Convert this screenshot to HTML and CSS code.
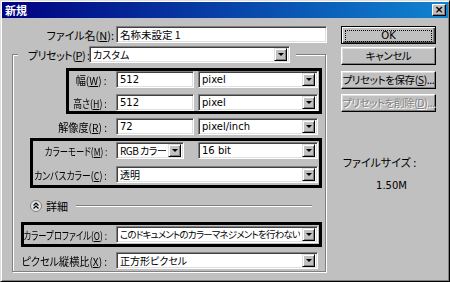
FILE: index.html
```html
<!DOCTYPE html>
<html lang="ja">
<head>
    <meta charset="UTF-8">
    <meta name="viewport" content="width=device-width, initial-scale=1.0">
    <title>新規</title>
    <link rel="stylesheet" href="styles.css">
</head>
<body>
    <div class="window">
        <div class="titlebar">
            <span class="title">新規</span>
            <span class="close">&#215;</span>
        </div>
        <div class="dialog">
            <div class="left">
                <div class="row name-row">
                    <label>ファイル名(<u>N</u>):</label>
                    <div class="field name-field">名称未設定 1</div>
                </div>

                <fieldset class="preset">
                    <legend>
                        <div class="legend-inner">
                            <label>プリセット(<u>P</u>) :</label>
                            <div class="field select preset-select"><span>カスタム</span><i class="arrow"></i></div>
                        </div>
                    </legend>

                    <div class="hl hl-size">
                        <div class="row">
                            <label><span class="cond-s">幅(<u>W</u>) :</span></label>
                            <div class="fields">
                                <div class="field num">512</div>
                                <div class="field select unit"><span>pixel</span><i class="arrow"></i></div>
                            </div>
                        </div>
                        <div class="row">
                            <label><span class="cond-m">高さ(<u>H</u>) :</span></label>
                            <div class="fields">
                                <div class="field num">512</div>
                                <div class="field select unit"><span>pixel</span><i class="arrow"></i></div>
                            </div>
                        </div>
                    </div>

                    <div class="row res-row">
                        <label><span class="cond-s">解像度(<u>R</u>) :</span></label>
                        <div class="fields">
                            <div class="field num">72</div>
                            <div class="field select unit"><span>pixel/inch</span><i class="arrow"></i></div>
                        </div>
                    </div>

                    <div class="hl hl-mode">
                        <div class="row">
                            <label><span class="cond-l">カラーモード(<u>M</u>) :</span></label>
                            <div class="fields">
                                <div class="field select mode"><span>RGB カラー</span><i class="arrow"></i></div>
                                <div class="field select unit"><span>16 bit</span><i class="arrow"></i></div>
                            </div>
                        </div>
                        <div class="row">
                            <label><span class="cond-m">カンバスカラー(<u>C</u>) :</span></label>
                            <div class="fields">
                                <div class="field select full"><span>透明</span><i class="arrow"></i></div>
                            </div>
                        </div>
                    </div>

                    <div class="details">
                        <svg class="toggle" width="12" height="12" viewBox="0 0 12 12">
                            <circle cx="6" cy="6" r="5.5" fill="#e4e4e4" stroke="#808080"/>
                            <polyline points="3.5,5.5 6,3 8.5,5.5" fill="none" stroke="#000" stroke-width="1.2"/>
                            <polyline points="3.5,8.5 6,6 8.5,8.5" fill="none" stroke="#000" stroke-width="1.2"/>
                        </svg>
                        <span class="details-label">詳細</span>
                        <span class="rule"></span>
                    </div>

                    <div class="hl hl-profile">
                        <div class="row">
                            <label><span class="cond-l">カラープロファイル(<u>O</u>) :</span></label>
                            <div class="fields">
                                <div class="field select full profile"><span>このドキュメントのカラーマネジメントを行わない</span><i class="arrow"></i></div>
                            </div>
                        </div>
                    </div>

                    <div class="row aspect-row">
                        <label><span class="cond-s">ピクセル縦横比(<u>X</u>) :</span></label>
                        <div class="fields">
                            <div class="field select full"><span>正方形ピクセル</span><i class="arrow"></i></div>
                        </div>
                    </div>
                </fieldset>
            </div>

            <div class="right">
                <button class="btn default"><span class="focus">OK</span></button>
                <button class="btn cancel">キャンセル</button>
                <button class="btn save">プリセットを保存(<u>S</u>)...</button>
                <button class="btn delete" disabled>プリセットを削除(<u>D</u>)...</button>
                <div class="size-info">
                    <div class="size-label">ファイルサイズ :</div>
                    <div class="size-value">1.50M</div>
                </div>
            </div>
        </div>
    </div>
</body>
</html>
```

FILE: styles.css
```css
body {
    margin: 0;
    font-family: "Noto Sans CJK JP", sans-serif;
    font-size: 11px;
    font-feature-settings: "palt";
    color: #000;
}

u {
    text-decoration: underline;
    text-underline-offset: 1px;
}

.window {
    width: 450px;
    height: 282px;
    box-sizing: border-box;
    background-color: #c0c0c0;
    border: 1px solid;
    border-color: #dfdfdf #000 #000 #dfdfdf;
    box-shadow: inset 1px 1px #fff, inset -1px -1px #808080;
    padding: 1px;
    overflow: hidden;
}

/* title bar */
.titlebar {
    height: 16px;
    display: flex;
    align-items: center;
    justify-content: space-between;
    padding: 0 2px 0 3px;
    background: linear-gradient(to right, #000080, #1084d0);
}

.title {
    color: #fff;
    font-weight: bold;
    font-size: 11px;
    line-height: 16px;
}

.close {
    width: 14px;
    height: 12px;
    box-sizing: border-box;
    background-color: #c0c0c0;
    border: 1px solid;
    border-color: #fff #000 #000 #fff;
    box-shadow: inset -1px -1px #808080;
    font-family: "DejaVu Sans", sans-serif;
    font-weight: bold;
    font-size: 11px;
    line-height: 9px;
    text-align: center;
}

/* dialog body */
.dialog {
    display: flex;
    padding: 8px 0 0 10px;
}

.left {
    width: 315px;
    min-width: 0;
}

.right {
    width: 95px;
    margin-left: 14px;
    display: flex;
    flex-direction: column;
}

.row {
    display: flex;
    align-items: center;
    height: 17px;
    margin-right: 7px;
}

.row label {
    flex: 1;
    min-width: 0;
    display: flex;
    justify-content: flex-end;
    padding-right: 9px;
    white-space: nowrap;
}

.row label span {
    display: inline-block;
    transform-origin: right center;
}

.cond-s {
    transform: scaleX(0.92);
}

.cond-m {
    transform: scaleX(0.8);
}

.cond-l {
    transform: scaleX(0.76);
}

.name-row {
    margin-right: 0;
}

.name-row label {
    padding-right: 2px;
}

.fields {
    flex: none;
    width: 202px;
    display: flex;
    justify-content: space-between;
}

/* inputs and selects */
.field {
    flex: none;
    height: 17px;
    box-sizing: border-box;
    background-color: #fff;
    border: 1px solid;
    border-color: #808080 #fff #fff #808080;
    box-shadow: inset 1px 1px #404040, inset -1px -1px #dfdfdf;
    padding: 0 2px 0 3px;
    font-size: 10px;
    line-height: 15px;
    white-space: nowrap;
    overflow: hidden;
}

.name-field {
    width: 211px;
    font-size: 10.5px;
}

.num {
    width: 78px;
    font-family: "DejaVu Sans", sans-serif;
}

.select {
    display: flex;
    align-items: center;
    justify-content: space-between;
    padding-right: 2px;
}

.select span {
    overflow: hidden;
}

.unit {
    width: 120px;
    font-family: "DejaVu Sans", sans-serif;
}

.mode {
    width: 68px;
}

.mode span {
    letter-spacing: -0.5px;
}

.full {
    width: 202px;
}

.profile span {
    font-size: 9.5px;
    letter-spacing: -0.8px;
}

.arrow {
    flex: none;
    width: 13px;
    height: 13px;
    box-sizing: border-box;
    background-color: #c0c0c0;
    border: 1px solid;
    border-color: #dfdfdf #000 #000 #dfdfdf;
    box-shadow: inset 1px 1px #fff, inset -1px -1px #808080;
    position: relative;
}

.arrow::after {
    content: "";
    position: absolute;
    left: 3px;
    top: 4px;
    border-left: 3px solid transparent;
    border-right: 3px solid transparent;
    border-top: 3px solid #000;
}

/* preset group */
.preset {
    margin: 3px 0 0 0;
    padding: 0 0 2px 0;
    width: 314px;
    min-width: 0;
    box-sizing: border-box;
    border: 1px solid #808080;
    box-shadow: inset 1px 1px #fff, 1px 1px #fff;
}

.preset legend {
    margin-left: 5px;
    padding: 0 6px 0 10px;
    background-color: #c0c0c0;
}

.legend-inner {
    display: flex;
    align-items: center;
}

.legend-inner label {
    width: 61px;
    white-space: nowrap;
    letter-spacing: -0.5px;
}

.preset-select {
    width: 201px;
}

/* highlight frames */
.hl {
    border: 3px solid #000;
    margin-right: 3px;
    padding-right: 1px;
}

.hl .row {
    margin-right: 0;
}

.hl-size {
    margin-top: 5px;
    margin-left: 53px;
}

.hl-size .row + .row {
    margin-top: 6px;
}

.res-row {
    margin-top: 4px;
}

.hl-mode {
    margin-top: 3px;
    margin-left: 17px;
    padding-top: 1px;
    padding-bottom: 2px;
}

.hl-mode .row + .row {
    margin-top: 7px;
}

.hl-profile {
    margin-top: 10px;
    margin-left: 8px;
    padding-top: 1px;
    padding-bottom: 1px;
}

.aspect-row {
    margin-top: 5px;
}

/* details toggle */
.details {
    display: flex;
    align-items: center;
    height: 13px;
    margin: 11px 13px 0 17px;
}

.toggle {
    flex: none;
}

.details-label {
    margin-left: 4px;
}

.rule {
    flex: 1;
    margin-left: 8px;
    border-top: 1px solid #808080;
    border-bottom: 1px solid #fff;
}

/* buttons */
.btn {
    height: 18px;
    width: 95px;
    padding: 0;
    background-color: #c0c0c0;
    border: 1px solid;
    border-color: #fff #000 #000 #fff;
    box-shadow: inset -1px -1px #808080, inset 1px 1px #dfdfdf;
    font-family: "Noto Sans CJK JP", sans-serif;
    font-feature-settings: "palt";
    font-size: 10.5px;
    letter-spacing: -0.4px;
    line-height: 14px;
    white-space: nowrap;
    color: #000;
}

.btn.default {
    border: 1px solid #000;
    box-shadow: inset 1px 1px #fff, inset -1px -1px #404040, inset -2px -2px #808080;
    font-family: "DejaVu Sans", sans-serif;
    font-size: 10px;
    letter-spacing: 0;
}

.focus {
    display: block;
    margin: 3px;
    height: 10px;
    line-height: 10px;
    border: 1px dotted #000;
}

.cancel {
    margin-top: 3px;
}

.save {
    margin-top: 6px;
}

.delete {
    margin-top: 5px;
    color: #808080;
    text-shadow: 1px 1px #fff;
}

.size-info {
    margin-top: 42px;
    text-align: center;
    color: #000;
}

.size-label {
    padding-right: 18px;
}

.size-value {
    margin-top: 10px;
    padding-left: 6px;
    font-family: "DejaVu Sans", sans-serif;
    font-size: 10px;
}
```
